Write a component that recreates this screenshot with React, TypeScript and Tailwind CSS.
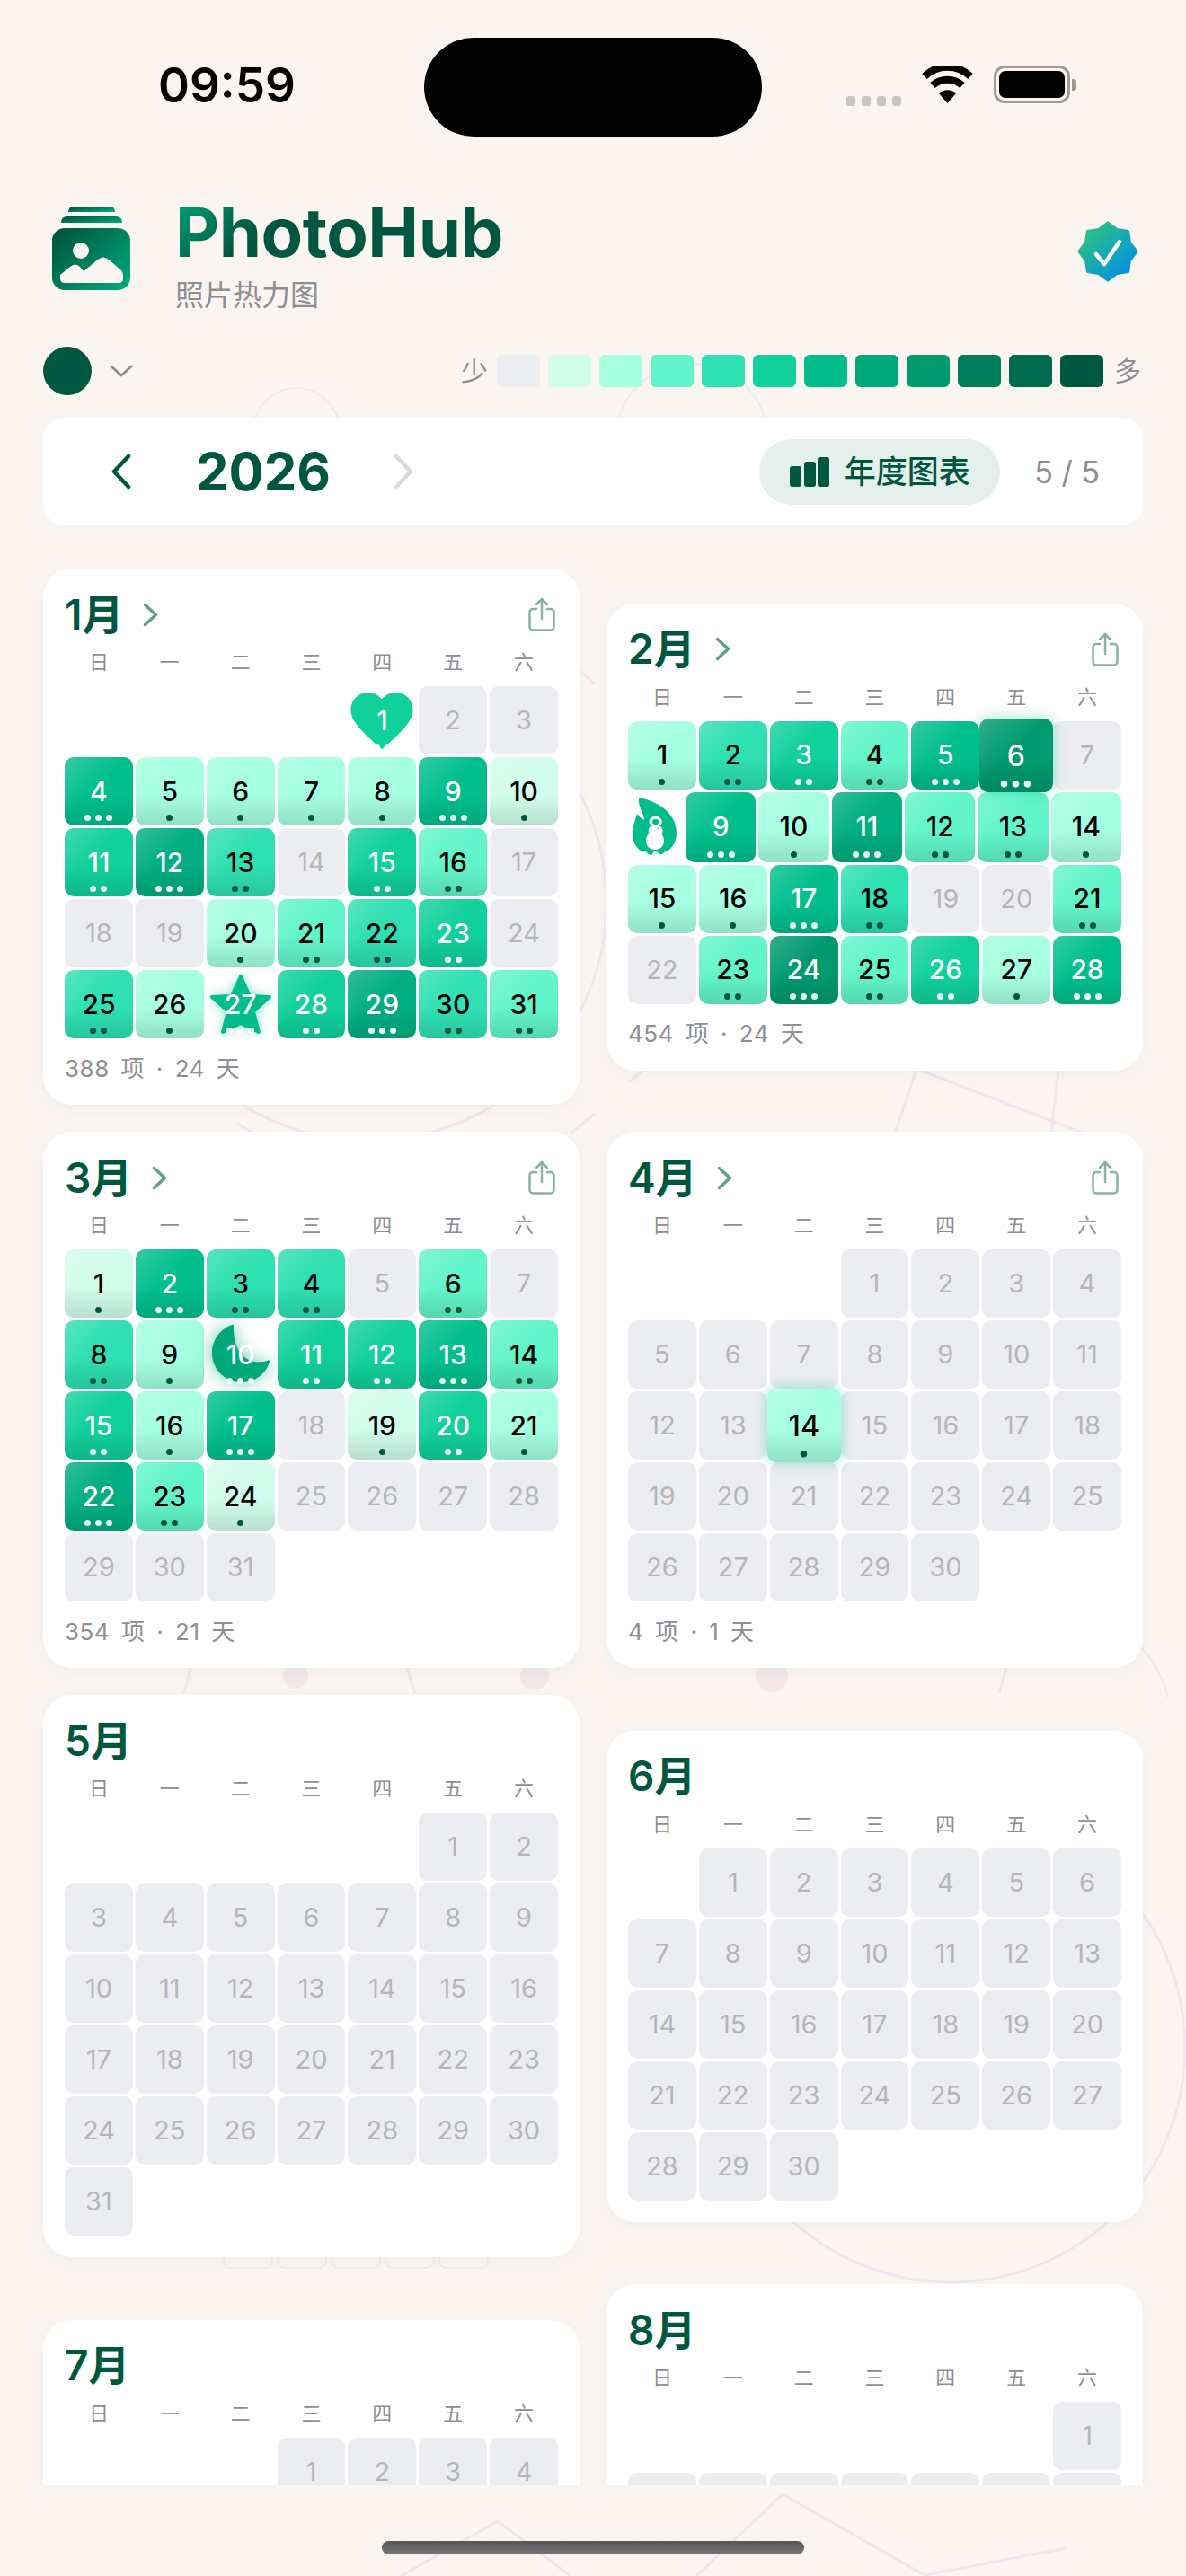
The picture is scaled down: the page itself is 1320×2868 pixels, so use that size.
type Special = 'heart' | 'star' | 'flame' | 'moon';

type Month = {
  name: string;
  start: number;
  days: number;
  levels?: number[];
  special?: Record<number, Special>;
  raised?: number[];
  stats?: string;
  wideRow?: number;
};

const months: Month[] = [
  {
    name: '1月',
    start: 4,
    days: 31,
    levels: [5, 0, 0, 6, 2, 2, 2, 2, 6, 1, 5, 7, 4, 0, 5, 3, 0, 0, 0, 2, 3, 4, 5, 0, 4, 2, 6, 5, 7, 4, 3],
    special: { 1: 'heart', 27: 'star' },
    stats: '388 项 · 24 天',
  },
  {
    name: '2月',
    start: 0,
    days: 28,
    levels: [2, 4, 5, 3, 6, 8, 0, 6, 6, 2, 7, 3, 3, 2, 2, 2, 6, 4, 0, 0, 3, 0, 3, 8, 3, 5, 2, 6],
    special: { 8: 'flame' },
    raised: [6],
    stats: '454 项 · 24 天',
    wideRow: 1,
  },
  {
    name: '3月',
    start: 0,
    days: 31,
    levels: [1, 6, 4, 4, 0, 3, 0, 4, 2, 7, 5, 5, 6, 3, 5, 2, 6, 0, 1, 5, 2, 7, 3, 1, 0, 0, 0, 0, 0, 0, 0],
    special: { 10: 'moon' },
    stats: '354 项 · 21 天',
  },
  {
    name: '4月',
    start: 3,
    days: 30,
    levels: [0, 0, 0, 0, 0, 0, 0, 0, 0, 0, 0, 0, 0, 2],
    raised: [14],
    stats: '4 项 · 1 天',
  },
  { name: '5月', start: 5, days: 31 },
  { name: '6月', start: 1, days: 30 },
  { name: '7月', start: 3, days: 31 },
  { name: '8月', start: 6, days: 31 },
];

const weekdays = ['日', '一', '二', '三', '四', '五', '六'];

const legend = [
  'bg-[#eceef2]',
  'bg-[#d1fdec]',
  'bg-[#a5ffe0]',
  'bg-[#62f5c9]',
  'bg-[#2ee0b2]',
  'bg-[#10d09c]',
  'bg-[#00bd8b]',
  'bg-[#00a97a]',
  'bg-[#009a6e]',
  'bg-[#007e5c]',
  'bg-[#006a4e]',
  'bg-[#00573f]',
];

const levelBg = ['', 'bg-[#d1fdec]', 'bg-[#a5ffe0]', 'bg-[#62f5c9]', 'bg-[#2ee0b2]', 'bg-[#10d09c]', 'bg-[#00bf8d]', 'bg-[#00ae81]', 'bg-[#009a6e]'];
const shapeColor = ['', '', '', '', '', 'text-[#10d09c]', 'text-[#00bd8b]', 'text-[#00a97a]', 'text-[#009a6e]'];

const badgePoints = Array.from({ length: 16 }, (_, i) => {
  const r = i % 2 === 0 ? 32 : 26.5;
  const a = ((i * 22.5 - 90) * Math.PI) / 180;
  return `${(35 + r * Math.cos(a)).toFixed(2)},${(35 + r * Math.sin(a)).toFixed(2)}`;
}).join(' ');

function Dots({ level }: { level: number }) {
  const count = level <= 2 ? 1 : level <= 5 ? 2 : 3;
  const color = level >= 5 ? 'bg-white/90' : 'bg-[#00573f]';
  return (
    <div className="absolute bottom-[5px] left-0 right-0 flex justify-center gap-[5px]">
      {Array.from({ length: count }, (_, i) => (
        <span className={`h-[7px] w-[7px] rounded-full ${color}`} key={i} />
      ))}
    </div>
  );
}

function Shape({ kind }: { kind: Special }) {
  if (kind === 'heart') {
    return (
      <svg className="absolute left-1/2 top-1/2 h-[83px] w-[83px] -translate-x-1/2 -translate-y-1/2" fill="currentColor" viewBox="0 0 24 24">
        <path d="M12 21.35l-1.45-1.32C5.4 15.36 2 12.28 2 8.5 2 5.42 4.42 3 7.5 3c1.74 0 3.41.81 4.5 2.09C13.09 3.81 14.76 3 16.5 3 19.58 3 22 5.42 22 8.5c0 3.78-3.4 6.86-8.55 11.54L12 21.35z" />
      </svg>
    );
  }
  if (kind === 'star') {
    return (
      <svg className="absolute inset-0 h-full w-full overflow-visible drop-shadow-[0_0_6px_rgba(0,189,139,0.45)]" fill="currentColor" stroke="currentColor" strokeLinejoin="round" strokeWidth="4" viewBox="0 0 76 76">
        <path d="M38 7 48 29 70 30 52 46 58 69 38 59 18 69 24 46 6 30 28 29Z" />
      </svg>
    );
  }
  if (kind === 'moon') {
    return (
      <svg className="absolute inset-0 h-full w-full overflow-visible drop-shadow-[0_0_10px_rgba(0,169,122,0.6)]" fill="currentColor" viewBox="0 0 76 76">
        <path d="M28 5A33 33 0 1 0 70 47C72 45 70 44 68 45 50 50 30 42 30 8 30 5 30 4 28 5Z" />
      </svg>
    );
  }
  return (
    <svg className="absolute inset-0 h-full w-full" fill="currentColor" viewBox="0 0 61 78">
      <path d="M12 8C12 6 14 6 16 7 38 12 54 26 54 46 54 60 43 70 30 70 15 70 5 60 5 47 5 38 8 31 10 24 12 27 15 29 18 31 18 24 11 16 12 8Z" />
      <path d="M30 36C33 42 40 47 40 54 40 60 36 64 30 64 24 64 20 60 20 54 20 47 27 42 30 36Z" fill="white" />
    </svg>
  );
}

function Cell({ day, level, special, raised }: { day: number; level: number; special?: Special; raised: boolean }) {
  if (special) {
    return (
      <div className={`relative flex items-center justify-center ${shapeColor[level]}`}>
        <Shape kind={special} />
        <span className="relative text-[30px] font-medium text-white">{day}</span>
        <Dots level={level} />
      </div>
    );
  }
  if (level === 0) {
    return <div className="flex items-center justify-center rounded-[10px] bg-[#ecedf1] text-[29px] text-[#b5b5ba]">{day}</div>;
  }
  return (
    <div
      className={`relative flex items-center justify-center rounded-[10px] bg-[linear-gradient(135deg,rgba(255,255,255,0.2),transparent_45%),linear-gradient(180deg,transparent_55%,rgba(0,0,0,0.12))] text-[30px] font-medium ${levelBg[level]} ${
        level >= 5 ? 'text-white' : 'text-black'
      } ${raised ? 'z-10 scale-[1.08] shadow-[0_0_14px_rgba(0,189,139,0.35)]' : ''}`}
    >
      {day}
      <Dots level={level} />
    </div>
  );
}

function MonthCard({ month }: { month: Month }) {
  const cells: (number | null)[] = [...Array.from({ length: month.start }, () => null), ...Array.from({ length: month.days }, (_, i) => i + 1)];
  const rows: (number | null)[][] = [];
  for (let i = 0; i < cells.length; i += 7) rows.push(cells.slice(i, i + 7));

  return (
    <article className="rounded-[32px] bg-white p-[24px] shadow-[0_6px_18px_rgba(60,40,20,0.03)]">
      <header className="flex h-[54px] items-center">
        <h2 className="text-[46px] font-semibold text-[#00573f]">{month.name}</h2>
        {month.stats && (
          <svg className="ml-[22px] h-[27px] w-[17px]" fill="none" stroke="#5f9f8b" strokeLinecap="round" strokeLinejoin="round" strokeWidth="3.5" viewBox="0 0 17 27">
            <path d="M2.5 2.5 14.5 13.5 2.5 24.5" />
          </svg>
        )}
        {month.stats && (
          <svg className="ml-auto mr-[3px] h-[38px] w-[30px]" fill="none" stroke="#86b3a5" strokeLinecap="round" strokeLinejoin="round" strokeWidth="2.5" viewBox="0 0 30 38">
            <path d="M9 13H5a3.5 3.5 0 0 0-3.5 3.5v16.500A3.500 3.500 0 0 0 5 36.500h20a3.500 3.500 0 0 0 3.500-3.500V16.500A3.500 3.500 0 0 0 25 13h-4" />
            <path d="M15 24V2M9 8l6-6 6 6" />
          </svg>
        )}
      </header>
      <div className="mb-[13px] mt-[10px] grid h-[30px] grid-cols-7 gap-[3px]">
        {weekdays.map((w) => (
          <div className="flex items-center justify-center text-[22px] text-[#8e8e93]" key={w}>
            {w}
          </div>
        ))}
      </div>
      <div className="flex flex-col gap-[3px]">
        {rows.map((row, r) => (
          <div
            className={`grid gap-[3px] ${month.wideRow === r ? 'h-[78px] grid-cols-[61px_repeat(6,1fr)]' : 'h-[76px] grid-cols-7'}`}
            key={r}
          >
            {row.map((day, c) =>
              day === null ? (
                <div key={c} />
              ) : (
                <Cell day={day} key={c} level={month.levels?.[day - 1] ?? 0} raised={month.raised?.includes(day) ?? false} special={month.special?.[day]} />
              ),
            )}
          </div>
        ))}
      </div>
      {month.stats && <p className="mt-[16px] flex h-[34px] items-center text-[26px] tracking-[0.5px] text-[#8e8e93] [word-spacing:5px]">{month.stats}</p>}
    </article>
  );
}

function Backdrop() {
  return (
    <svg className="absolute inset-0 h-full w-full" fill="none" stroke="#f0e6f0" strokeWidth="3" viewBox="0 0 1320 2868">
      <circle cx="330" cy="480" r="48" strokeWidth="1.5" />
      <circle cx="770" cy="490" r="85" strokeWidth="1.5" />
      <circle cx="410" cy="1005" r="265" />
      <path d="M640 742 662 762" />
      <path d="M996 1262 1020 1190 1207 1262M1170 1262 1178 1190" />
      <path d="M700 1205 718 1190M205 1885 212 1857M453 1857 462 1885M1120 1857 1112 1885" />
      <path d="M263 1250 282 1262M635 1262 662 1240" />
      <path d="M1271 1835C1285 1850 1295 1870 1300 1890" strokeWidth="2" />
      <circle cx="1058" cy="2280" r="261" />
      <circle cx="329" cy="1866" fill="#f3e7ea" r="14" stroke="none" />
      <circle cx="595" cy="1866" fill="#f3e7ea" r="16" stroke="none" />
      <circle cx="859" cy="1866" fill="#f3e7ea" r="18" stroke="none" />
      <g stroke="#efe8e6" strokeWidth="1.5">
        <rect height="56" rx="8" width="54" x="249" y="2469" />
        <rect height="56" rx="8" width="54" x="309" y="2469" />
        <rect height="56" rx="8" width="54" x="369" y="2469" />
        <rect height="56" rx="8" width="54" x="429" y="2469" />
        <rect height="56" rx="8" width="54" x="489" y="2469" />
      </g>
      <path d="M446 2868 554 2807 635 2868" />
      <path d="M775 2868 871 2777 1029 2867 1187 2837" />
    </svg>
  );
}

export default function App() {
  return (
    <div className="relative h-[2868px] w-[1320px] overflow-hidden bg-[#faf5f1] font-['Inter','Noto_Sans_CJK_SC',sans-serif]">
      <Backdrop />

      <div className="relative flex h-full flex-col">
        {/* status bar */}
        <div className="flex h-[192px] shrink-0 items-center justify-between pl-[176px] pr-[122px]">
          <span className="text-[53px] font-semibold text-black">09:59</span>
          <div className="-mt-[4px] flex items-center">
            <div className="mt-[36px] flex gap-[7px]">
              <span className="h-[11px] w-[10px] rounded-[3px] bg-[#c8c6c2]" />
              <span className="h-[11px] w-[10px] rounded-[3px] bg-[#c8c6c2]" />
              <span className="h-[11px] w-[10px] rounded-[3px] bg-[#c8c6c2]" />
              <span className="h-[11px] w-[10px] rounded-[3px] bg-[#c8c6c2]" />
            </div>
            <svg className="ml-[23px] h-[42px] w-[57px]" fill="none" stroke="black" strokeWidth="8" viewBox="0 0 57 42">
              <path d="M3 12A37 37 0 0 1 54 12" />
              <path d="M12 22A25 25 0 0 1 45 22" />
              <path d="M28.500 42 19 31A14 14 0 0 1 38 31Z" fill="black" stroke="none" />
            </svg>
            <div className="ml-[23px] flex h-[42px] w-[85px] items-center rounded-[12px] border-[3px] border-[#a09b96] p-[3px]">
              <div className="h-full w-full rounded-[7px] bg-black" />
            </div>
            <span className="ml-[2px] h-[13px] w-[5px] rounded-r-[3px] bg-[#a09b96]" />
          </div>
        </div>

        {/* app header */}
        <div className="flex h-[194px] shrink-0 pl-[58px] pr-[52px]">
          <svg className="mt-[38px] h-[93px] w-[87px]" viewBox="0 0 87 93">
            <defs>
              <linearGradient id="logo" x1="0" x2="1" y1="0.2" y2="1">
                <stop offset="0" stopColor="#00573f" />
                <stop offset="1" stopColor="#00ad80" />
              </linearGradient>
            </defs>
            <path d="M18 6Q18 0 24 0H64Q70 0 70 6Z" fill="url(#logo)" />
            <path d="M10 18Q10 11 17 11H71Q78 11 78 18Z" fill="url(#logo)" />
            <rect fill="url(#logo)" height="69" rx="14" width="87" y="24" />
            <circle cx="32" cy="49" fill="#faf5f1" r="9" />
            <path d="M9 76 20 67Q26 62 31 67L35 72 51 59Q57 54 63 59L77 71Q79 73 79 76V80Q79 85 74 85H14Q9 85 9 80Z" fill="#faf5f1" />
          </svg>
          <div className="ml-[50px] mt-[24px]">
            <h1 className="bg-[linear-gradient(135deg,#00a97a,#00573f_28%)] bg-clip-text text-[76px] font-bold leading-[84px] tracking-[-0.5px] text-transparent">PhotoHub</h1>
            <p className="mt-[9px] text-[32px] leading-[40px] text-[#8e8e93]">照片热力图</p>
          </div>
          <svg className="ml-auto mt-[53px] h-[70px] w-[70px]" viewBox="0 0 70 70">
            <defs>
              <linearGradient id="badge" x1="0.15" x2="0.9" y1="0.1" y2="0.9">
                <stop offset="0" stopColor="#2cc282" />
                <stop offset="1" stopColor="#0090e8" />
              </linearGradient>
            </defs>
            <polygon fill="url(#badge)" points={badgePoints} stroke="url(#badge)" strokeLinejoin="round" strokeWidth="3" />
            <path d="M22 38 31 49 48 24" fill="none" stroke="white" strokeLinecap="round" strokeLinejoin="round" strokeWidth="4.500" />
          </svg>
        </div>

        {/* colour + legend */}
        <div className="flex h-[54px] shrink-0 items-center pl-[48px] pr-[50px]">
          <span className="h-[54px] w-[54px] rounded-full bg-[#00573f]" />
          <svg className="ml-[20px] h-[14px] w-[26px]" fill="none" stroke="#8e8e93" strokeLinecap="round" strokeLinejoin="round" strokeWidth="3" viewBox="0 0 26 14">
            <path d="M2 2 13 12 24 2" />
          </svg>
          <span className="ml-auto mr-[10px] text-[30px] text-[#8e8e93]">少</span>
          <div className="flex gap-[9px]">
            {legend.map((c) => (
              <span className={`h-[36px] w-[48px] rounded-[6px] ${c}`} key={c} />
            ))}
          </div>
          <span className="ml-[12px] text-[30px] text-[#8e8e93]">多</span>
        </div>

        {/* year bar */}
        <div className="mx-[48px] mt-[25px] flex h-[120px] shrink-0 items-center rounded-[24px] bg-white pl-[76px] pr-[48px]">
          <svg className="h-[40px] w-[22px]" fill="none" stroke="#00573f" strokeLinecap="round" strokeLinejoin="round" strokeWidth="4.500" viewBox="0 0 22 40">
            <path d="M19 3 3 20 19 37" />
          </svg>
          <span className="ml-[72px] w-[150px] text-[58px] font-bold text-[#00573f]">2026</span>
          <svg className="ml-[70px] h-[40px] w-[22px]" fill="none" stroke="#d8dadc" strokeLinecap="round" strokeLinejoin="round" strokeWidth="4.500" viewBox="0 0 22 40">
            <path d="M3 3 19 20 3 37" />
          </svg>
          <button className="ml-auto flex h-[73px] w-[268px] items-center justify-center gap-[17px] rounded-[36px] bg-[#e5efeb]" type="button">
            <svg className="h-[33px] w-[44px]" fill="#00573f" viewBox="0 0 44 33">
              <rect height="23" rx="3" width="13" y="10" />
              <rect height="28" rx="3" width="13" x="16" y="5" />
              <rect height="33" rx="3" width="13" x="31" />
            </svg>
            <span className="text-[35px] font-medium text-[#00573f]">年度图表</span>
          </button>
          <span className="ml-[38px] text-[34px] text-[#8e8e93]">5 / 5</span>
        </div>

        {/* months */}
        <div className="h-[2182px] shrink-0 overflow-hidden px-[48px] pt-[48px]">
          <div className="grid grid-cols-2 items-center gap-x-[30px] gap-y-[30px]">
            {months.map((m) => (
              <MonthCard key={m.name} month={m} />
            ))}
          </div>
        </div>
      </div>

      {/* home indicator */}
      <div className="absolute left-[425px] top-[2829px] h-[15px] w-[470px] rounded-[8px] bg-[linear-gradient(180deg,#555,#777)]" />
      {/* dynamic island */}
      <div className="absolute left-[472px] top-[42px] h-[110px] w-[376px] rounded-[55px] bg-black" />
    </div>
  );
}
